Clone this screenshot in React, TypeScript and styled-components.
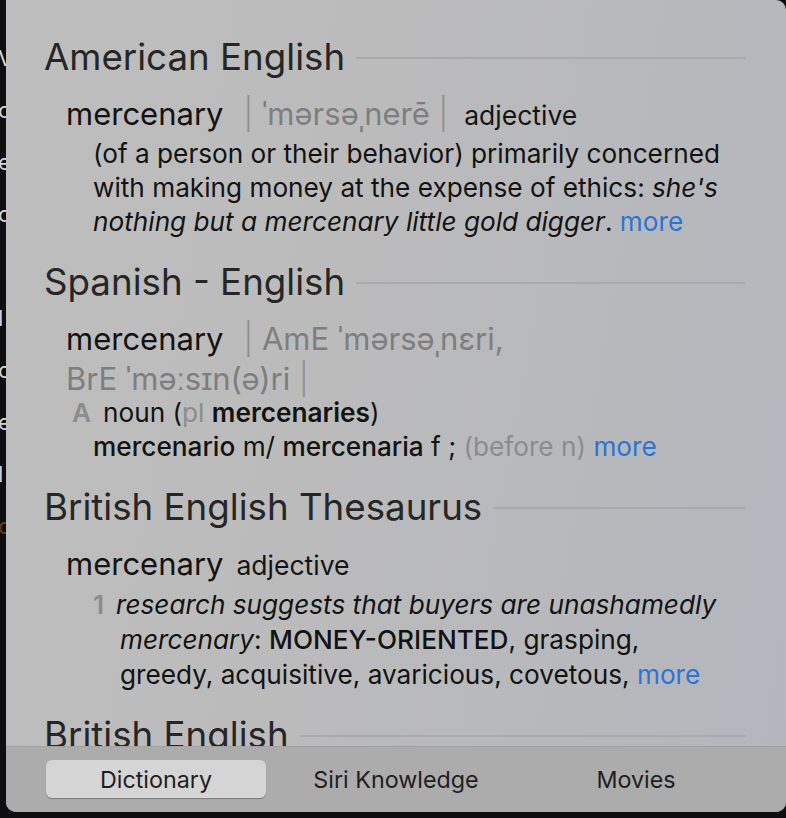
import React from "react";
import styled, { createGlobalStyle } from "styled-components";

const GlobalStyle = createGlobalStyle`
  html, body { margin: 0; padding: 0; background: #0e0e10; }
  body { font-family: Inter, "Helvetica Neue", "Liberation Sans", sans-serif; -webkit-font-smoothing: antialiased; }
`;

const Screen = styled.div`
  display: flex;
  width: 786px;
  height: 818px;
  background: #0e0e10;
  overflow: hidden;
`;

const BackdropStrip = styled.div`
  flex: none;
  width: 6px;
  overflow: hidden;
  display: flex;
  flex-direction: column;
  padding-top: 32px;
`;

const BackdropGlyph = styled.span<{ $tone?: string }>`
  display: block;
  height: 52px;
  margin-left: -2px;
  font-size: 22px;
  line-height: 52px;
  color: ${(p) => p.$tone || "#d6d6d8"};
`;

const Popover = styled.div`
  flex: none;
  width: 780px;
  height: 812px;
  display: flex;
  flex-direction: column;
  border-radius: 0 10px 10px 10px;
  overflow: hidden;
  background: linear-gradient(100deg, #bebebe 0%, #bbbbbc 45%, #b3b6bd 100%);
`;

const Content = styled.div`
  flex: 1;
  overflow: hidden;
  padding: 34px 40px 0 38px;
  display: flex;
  flex-direction: column;
`;

const Section = styled.section`
  display: flex;
  flex-direction: column;
  padding-bottom: 20px;
`;

const HeadingRow = styled.div`
  display: flex;
  align-items: center;
  gap: 11px;
`;

const HeadingTitle = styled.h2`
  margin: 0;
  font-size: 36.7px;
  font-weight: 400;
  line-height: 46px;
  color: #262626;
  white-space: nowrap;
`;

const Rule = styled.div`
  flex: 1;
  height: 2px;
  margin-top: 2px;
  background: #a9aaad;
`;

const EntryLine = styled.div<{ $top?: number }>`
  padding-left: 22px;
  margin-top: ${(p) => p.$top ?? 0}px;
  font-size: 31px;
  line-height: 40px;
  color: #141414;
  white-space: nowrap;
`;

const Headword = styled.span`
  color: #121212;
`;

const Pron = styled.span<{ $gap?: number }>`
  color: #7e7e80;
  margin-left: ${(p) => p.$gap ?? 0}px;
`;

const Bar = styled.span`
  color: #909092;
  font-weight: 300;
`;

const Pos = styled.span<{ $gap?: number }>`
  font-size: 26.5px;
  margin-left: ${(p) => p.$gap ?? 0}px;
  color: #141414;
`;

const Sense = styled.div<{ $top?: number; $lh?: number }>`
  padding-left: 49px;
  margin-top: ${(p) => p.$top ?? 2}px;
  font-size: 26.2px;
  line-height: ${(p) => p.$lh ?? 34}px;
  color: #121212;
  white-space: nowrap;
`;

const Line = styled.div<{ $shift?: number }>`
  margin-left: ${(p) => p.$shift ?? 0}px;
`;

const Example = styled.i`
  font-style: italic;
`;

const Strong = styled.b<{ $weight?: number }>`
  font-weight: ${(p) => p.$weight ?? 600};
`;

const Muted = styled.span`
  color: #8c8c8e;
`;

const SenseNum = styled.span<{ $width: number }>`
  display: inline-block;
  width: ${(p) => p.$width}px;
  color: #8c8c8e;
  font-weight: 600;
`;

const More = styled.a`
  color: #2b74d6;
  text-decoration: none;
`;

const TabBar = styled.nav`
  flex: none;
  height: 66px;
  box-sizing: border-box;
  border-top: 1px solid #a1a1a2;
  background: #acacad;
  padding: 13px 40px 14px 40px;
  display: grid;
  grid-template-columns: repeat(3, 220px);
  column-gap: 20px;
`;

const Tab = styled.div<{ $active?: boolean }>`
  display: flex;
  align-items: center;
  justify-content: center;
  border-radius: 6px;
  font-size: 23.3px;
  color: #1e1e1e;
  background: ${(p) => (p.$active ? "#d5d5d6" : "transparent")};
  box-shadow: ${(p) => (p.$active ? "0 1px 1px rgba(0,0,0,0.28)" : "none")};
`;

const glyphs: { ch: string; tone?: string }[] = [
  { ch: "V" },
  { ch: "o" },
  { ch: "e" },
  { ch: "o" },
  { ch: "" },
  { ch: "l", tone: "#c9cfe0" },
  { ch: "c" },
  { ch: "e" },
  { ch: "l", tone: "#c9cfe0" },
  { ch: "c", tone: "#6b3a22" },
];

export default function App() {
  return (
    <>
      <GlobalStyle />
      <Screen>
        <BackdropStrip>
          {glyphs.map((g, i) => (
            <BackdropGlyph key={i} $tone={g.tone}>
              {g.ch || "\u00a0"}
            </BackdropGlyph>
          ))}
        </BackdropStrip>
        <Popover>
          <Content>
            <Section>
              <HeadingRow>
                <HeadingTitle>American English</HeadingTitle>
                <Rule />
              </HeadingRow>
              <EntryLine $top={14}>
                <Headword>mercenary</Headword>
                <Pron $gap={20}>
                  <Bar>|</Bar> ˈmərsəˌnerē <Bar>|</Bar>
                </Pron>
                <Pos $gap={16}>adjective</Pos>
              </EntryLine>
              <Sense>
                <Line>(of a person or their behavior) primarily concerned</Line>
                <Line>
                  with making money at the expense of ethics: <Example>she's</Example>
                </Line>
                <Line>
                  <Example>nothing but a mercenary little gold digger</Example>.{" "}
                  <More>more</More>
                </Line>
              </Sense>
            </Section>

            <Section>
              <HeadingRow>
                <HeadingTitle>Spanish - English</HeadingTitle>
                <Rule />
              </HeadingRow>
              <EntryLine $top={14}>
                <Headword>mercenary</Headword>
                <Pron $gap={20}>
                  <Bar>|</Bar> AmE ˈmərsəˌnɛri,
                </Pron>
              </EntryLine>
              <EntryLine>
                <Pron>
                  BrE ˈməːsɪn(ə)ri <Bar>|</Bar>
                </Pron>
              </EntryLine>
              <Sense $top={-3}>
                <Line $shift={-21}>
                  <SenseNum $width={31}>A</SenseNum>noun (<Muted>pl</Muted>{" "}
                  <Strong>mercenaries</Strong>)
                </Line>
                <Line>
                  <Strong $weight={500}>mercenario</Strong> m/{" "}
                  <Strong $weight={500}>mercenaria</Strong> f ;{" "}
                  <Muted>(before n)</Muted> <More>more</More>
                </Line>
              </Sense>
            </Section>

            <Section>
              <HeadingRow>
                <HeadingTitle>British English Thesaurus</HeadingTitle>
                <Rule />
              </HeadingRow>
              <EntryLine $top={14}>
                <Headword>mercenary</Headword>
                <Pos $gap={13}>adjective</Pos>
              </EntryLine>
              <Sense $lh={35}>
                <Line>
                  <SenseNum $width={23}>1</SenseNum>
                  <Example>research suggests that buyers are unashamedly</Example>
                </Line>
                <Line $shift={27}>
                  <Example>mercenary</Example>: <Strong $weight={500}>MONEY-ORIENTED</Strong>, grasping,
                </Line>
                <Line $shift={27}>
                  greedy, acquisitive, avaricious, covetous, <More>more</More>
                </Line>
              </Sense>
            </Section>

            <Section>
              <HeadingRow>
                <HeadingTitle>British English</HeadingTitle>
                <Rule />
              </HeadingRow>
            </Section>
          </Content>
          <TabBar>
            <Tab $active>Dictionary</Tab>
            <Tab>Siri Knowledge</Tab>
            <Tab>Movies</Tab>
          </TabBar>
        </Popover>
      </Screen>
    </>
  );
}
